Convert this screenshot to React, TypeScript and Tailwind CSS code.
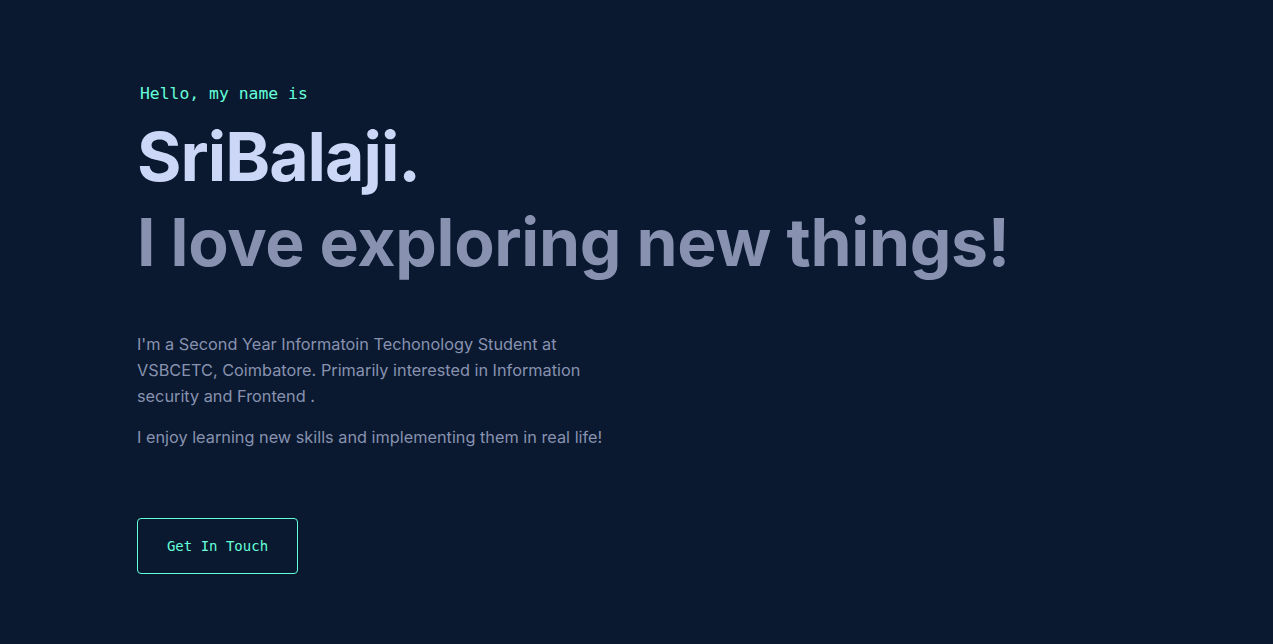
export default function App() {
  return (
    <div className="min-h-screen w-full bg-[#0a192f]">
      <section className="flex flex-col items-start pl-[137px] pt-[84px]">
        <h1 className="pl-[3px] text-[16.4px] leading-[20px] text-[#64ffda] font-['DejaVu_Sans_Mono',monospace]">
          Hello, my name is
        </h1>
        <h2 className="mt-[12px] text-[68px] leading-[80px] font-bold tracking-[-1px] text-[#ccd6f6] font-['Inter',sans-serif]">
          SriBalaji.
        </h2>
        <h3 className="mt-[6px] text-[66px] leading-[80px] font-bold tracking-[-0.3px] text-[#8892b0] font-['Inter',sans-serif]">
          I love exploring new things!
        </h3>
        <div className="mt-[49px] max-w-[480px] text-[16.3px] leading-[26px] text-[#8892b0] font-['Inter',sans-serif]">
          <p>
            I'm a Second Year Informatoin Techonology Student at VSBCETC, Coimbatore. Primarily interested in
            Information security and Frontend .
          </p>
          <p className="mt-[15px]">I enjoy learning new skills and implementing them in real life!</p>
        </div>
        <button className="mt-[68px] h-[56px] w-[161px] rounded-[4px] border border-[#64ffda] text-[14px] text-[#64ffda] font-['DejaVu_Sans_Mono',monospace]">
          Get In Touch
        </button>
      </section>
    </div>
  );
}
